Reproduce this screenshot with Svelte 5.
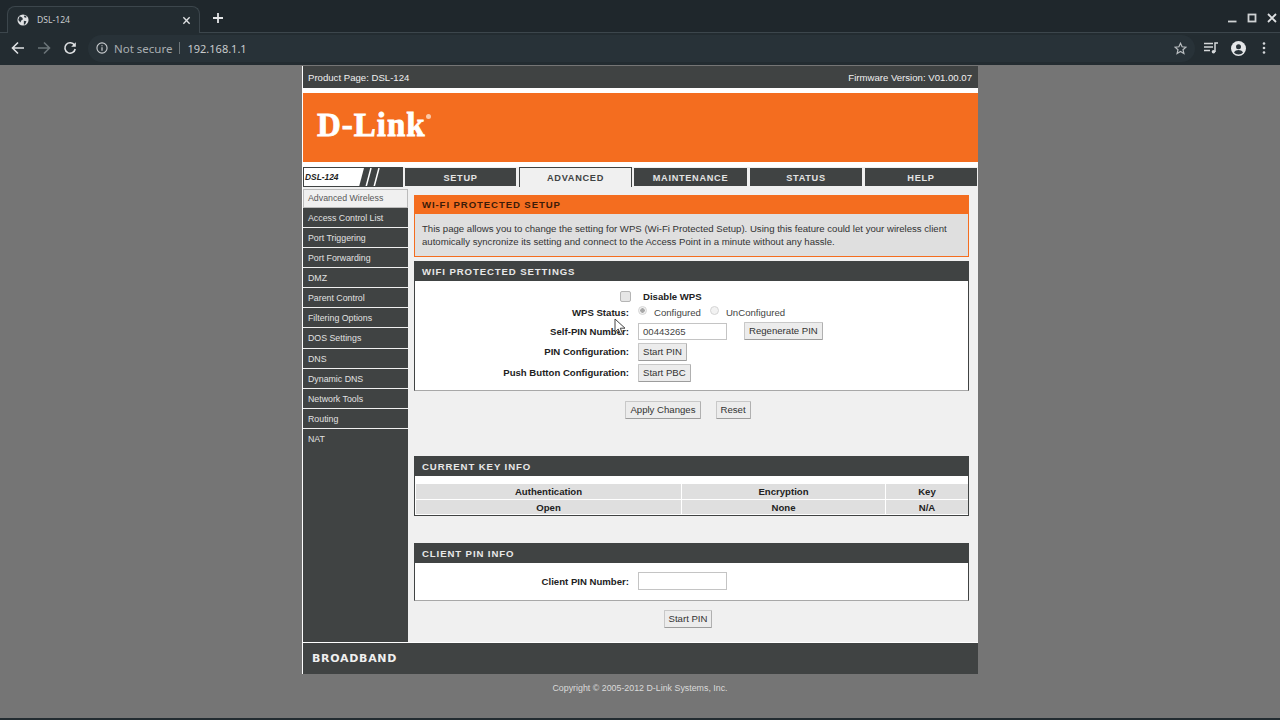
<script>
    const tabs = ["SETUP", "ADVANCED", "MAINTENANCE", "STATUS", "HELP"];
    const side = [
        "Advanced Wireless", "Access Control List", "Port Triggering", "Port Forwarding", "DMZ", "Parent Control",
        "Filtering Options", "DOS Settings", "DNS", "Dynamic DNS", "Network Tools", "Routing", "NAT"
    ];
</script>

<div class="browser">
    <div class="tabstrip">
        <div class="tab">
            <svg class="globe" width="12" height="12" viewBox="0 0 14 14">
                <circle cx="7" cy="7" r="6.5" fill="#dfe1e3" />
                <path d="M3 2.500l3 1.500 1 2-2 1.500-1 2.500-2.500-3zM8 8l3 .5-1.500 3.500-1.500.5zM9 1.500l2.500 2-1.500 1-2-1z" fill="#2a343a" />
            </svg>
            <span class="tab-title">DSL-124</span>
            <svg class="tab-x" width="9" height="9" viewBox="0 0 10 10"><path d="M1.500 1.500l7 7M8.500 1.500l-7 7" stroke="#dfe1e3" stroke-width="1.500" /></svg>
        </div>
        <svg class="plus" width="12" height="12" viewBox="0 0 12 12"><path d="M6 1v10M1 6h10" stroke="#e4e6e8" stroke-width="1.800" /></svg>
        <div class="winctl">
            <svg width="10" height="10" viewBox="0 0 10 10"><path d="M1 8.500h8.500" stroke="#cfd2d4" stroke-width="1.800" /></svg>
            <svg width="10" height="10" viewBox="0 0 10 10"><rect x="1.500" y="1.500" width="7" height="7" fill="none" stroke="#cfd2d4" stroke-width="1.800" /></svg>
            <svg width="10" height="10" viewBox="0 0 10 10"><path d="M1 1l8 8M9 1l-8 8" stroke="#dfe1e3" stroke-width="1.800" /></svg>
        </div>
    </div>
    <div class="toolbar">
        <svg width="14" height="14" viewBox="0 0 14 14"><path d="M13 7H2M7 1.500L1.500 7 7 12.500" fill="none" stroke="#dfe1e3" stroke-width="1.600" /></svg>
        <svg class="fwd" width="14" height="14" viewBox="0 0 14 14"><path d="M1 7h11M7 1.500L12.500 7 7 12.500" fill="none" stroke="#6b7478" stroke-width="1.600" /></svg>
        <svg class="reload" width="14" height="14" viewBox="0 0 14 14"><path d="M11.500 4.200A5.200 5.200 0 1 0 12.200 8" fill="none" stroke="#dfe1e3" stroke-width="1.600" /><path d="M12.800 1.200v4.600H8.200z" fill="#dfe1e3" /></svg>
        <div class="omnibox">
            <svg width="12" height="12" viewBox="0 0 13 13"><circle cx="6.500" cy="6.500" r="5.500" fill="none" stroke="#c9cccf" stroke-width="1.200" /><path d="M6.500 5.800v3.600M6.500 3.400v1.200" stroke="#c9cccf" stroke-width="1.300" /></svg>
            <span class="secure">Not secure</span>
            <span class="bar"></span>
            <span class="url">192.168.1.1</span>
            <svg class="star" width="13" height="13" viewBox="0 0 13 13"><path d="M6.500 1.300l1.600 3.500 3.800.4-2.900 2.500.9 3.700-3.400-2-3.400 2 .9-3.700L1.100 5.200l3.800-.4z" fill="none" stroke="#b9bdc0" stroke-width="1.200" /></svg>
        </div>
        <svg class="queue" width="14" height="12" viewBox="0 0 14 12"><path d="M0 1.500h9M0 5h9M0 8.500h6" stroke="#d5d8da" stroke-width="1.400" /><path d="M11 10V1h3" fill="none" stroke="#d5d8da" stroke-width="1.500" /><circle cx="9.500" cy="9.800" r="1.800" fill="#d5d8da" /></svg>
        <svg class="avatar" width="15" height="15" viewBox="0 0 15 15"><circle cx="7.500" cy="7.500" r="7.500" fill="#e4e6e8" /><circle cx="7.500" cy="5.700" r="2.500" fill="#2a343a" /><path d="M3 11.500c1-2 2.700-2.600 4.500-2.600s3.500.6 4.500 2.600c-1 1.200-2.700 1.900-4.500 1.900S4 12.700 3 11.500z" fill="#2a343a" /></svg>
        <svg class="dots" width="4" height="12" viewBox="0 0 4 12"><circle cx="2" cy="1.500" r="1.300" fill="#d5d8da" /><circle cx="2" cy="6" r="1.300" fill="#d5d8da" /><circle cx="2" cy="10.500" r="1.300" fill="#d5d8da" /></svg>
    </div>
</div>

<div class="viewport">
    <div class="page">
        <div class="topbar">
            <span>Product Page: DSL-124</span>
            <span>Firmware Version: V01.00.07</span>
        </div>
        <div class="banner">
            <span class="logo">D-Link</span><span class="logo-dot"></span>
        </div>
        <div class="nav">
            <div class="model">
                <span class="model-name">DSL-124</span>
                <svg class="slashes" width="46" height="19" viewBox="0 0 46 19">
                    <path d="M2 19L7 0H46V19z" fill="#404343" />
                    <path d="M9 19L14 0M17 19L22 0" stroke="#fff" stroke-width="1.500" />
                </svg>
            </div>
            {#each tabs as t}
                <div class="navtab" class:active={t === "ADVANCED"}>{t}</div>
            {/each}
        </div>
        <div class="body">
            <div class="sidebar">
                {#each side as s, i}
                    <div class="sideitem" class:current={i === 0}>{s}</div>
                {/each}
            </div>
            <div class="main">
                <div class="intro">
                    <div class="intro-head">WI-FI PROTECTED SETUP</div>
                    <p>This page allows you to change the setting for WPS (Wi-Fi Protected Setup). Using this feature could let your wireless client automically syncronize its setting and connect to the Access Point in a minute without any hassle.</p>
                </div>

                <div class="box settings">
                    <div class="box-head">WIFI PROTECTED SETTINGS</div>
                    <div class="form">
                        <div class="row r-disable">
                            <div class="lbl chk-cell"><span class="chk"></span></div>
                            <div class="val"><b class="disable-label">Disable WPS</b></div>
                        </div>
                        <div class="row r-status">
                            <div class="lbl">WPS Status:</div>
                            <div class="val radios">
                                <span class="radio on"></span><span class="rtext">Configured</span>
                                <span class="radio"></span><span class="rtext">UnConfigured</span>
                            </div>
                        </div>
                        <div class="row r-pin">
                            <div class="lbl">Self-PIN Number:</div>
                            <div class="val">
                                <span class="input">00443265</span>
                                <span class="btn regen">Regenerate PIN</span>
                            </div>
                        </div>
                        <div class="row r-btn">
                            <div class="lbl">PIN Configuration:</div>
                            <div class="val"><span class="btn">Start PIN</span></div>
                        </div>
                        <div class="row r-btn">
                            <div class="lbl">Push Button Configuration:</div>
                            <div class="val"><span class="btn">Start PBC</span></div>
                        </div>
                    </div>
                </div>

                <div class="actions">
                    <span class="btn">Apply Changes</span>
                    <span class="btn">Reset</span>
                </div>

                <div class="box keyinfo">
                    <div class="box-head">CURRENT KEY INFO</div>
                    <div class="keys">
                        <div>Authentication</div><div>Encryption</div><div>Key</div>
                        <div>Open</div><div>None</div><div>N/A</div>
                    </div>
                </div>

                <div class="box clientpin">
                    <div class="box-head">CLIENT PIN INFO</div>
                    <div class="row client-row">
                        <div class="lbl">Client PIN Number:</div>
                        <div class="val"><span class="input client-input"></span></div>
                    </div>
                </div>

                <div class="actions last">
                    <span class="btn">Start PIN</span>
                </div>
            </div>
        </div>
        <div class="footer"><span class="broadband">BROADBAND</span></div>
    </div>
    <div class="copyright">Copyright © 2005-2012 D-Link Systems, Inc.</div>
    <svg class="cursor" width="12" height="18" viewBox="0 0 12 18"><path d="M1 1v13l3.200-3 2.400 5.500 2-.9-2.300-5.400H11z" fill="#fff" stroke="#444" stroke-width="1" /></svg>
</div>
<div class="bottom"></div>

<style>
    :global(body) {
        margin: 0;
        background: #757575;
        font-family: "Liberation Sans", Arial, sans-serif;
        overflow: hidden;
    }
    .browser {
        height: 65px;
        background: #232c31;
        box-sizing: border-box;
    }
    .tabstrip {
        height: 33px;
        display: flex;
        align-items: flex-end;
        position: relative;
        border-bottom: 1px solid #3c464c;
        box-sizing: border-box;
        background: #1f272c;
    }
    .tab {
        width: 193px;
        height: 27px;
        margin-left: 7px;
        margin-bottom: -1px;
        background: #232c31;
        border: 1px solid #3c464c;
        border-bottom: none;
        border-radius: 8px 8px 0 0;
        display: flex;
        align-items: center;
        box-sizing: border-box;
        padding: 0 8px 0 9px;
    }
    .tab-title {
        margin-left: 8px;
        font-family: "Noto Sans", sans-serif;
        font-size: 8.6px;
        color: #c8cbcd;
    }
    .tab-x { margin-left: auto; }
    .plus { margin: 0 0 8px 12px; }
    .winctl {
        margin-left: auto;
        display: flex;
        gap: 10px;
        padding-right: 3px;
        margin-bottom: 9px;
    }
    .toolbar {
        height: 32px;
        display: flex;
        align-items: center;
        padding: 0 0 2px 11px;
        box-sizing: border-box;
    }
    .fwd { margin-left: 12px; }
    .reload { margin-left: 12px; }
    .omnibox {
        flex: 0 0 1107px;
        height: 27px;
        margin-left: 11px;
        display: flex;
        align-items: center;
        padding-left: 8px;
        box-sizing: border-box;
        border-radius: 14px;
        background: #283238;
        font-family: "Noto Sans", sans-serif;
        font-size: 11.5px;
    }
    .secure { margin-left: 6px; color: #a9aeb1; }
    .bar { width: 1px; height: 12px; background: #6b7478; margin: 0 7px; }
    .url { color: #c8cbcd; font-size: 11px; }
    .star { margin-left: auto; margin-right: 8px; }
    .queue { margin-left: 9px; }
    .avatar { margin-left: 13px; }
    .dots { margin-left: 16px; }

    .viewport {
        height: 653px;
        background: #757575;
        position: relative;
        overflow: hidden;
    }
    .page {
        width: 675px;
        margin-left: 303px;
        margin-top: 1px;
        background: #fff;
        box-shadow: -1px 0 0 #fff;
    }
    .topbar {
        height: 22px;
        background: #404343;
        color: #f0f0f0;
        font-size: 9.6px;
        display: flex;
        justify-content: space-between;
        align-items: center;
        padding: 0 6px 0 5px;
    }
    .banner {
        height: 69px;
        margin-top: 5px;
        background: #f46d1f;
        display: flex;
        align-items: center;
        padding: 0 0 5px 14px;
        box-sizing: border-box;
    }
    .logo {
        font-family: "Liberation Serif", serif;
        font-weight: bold;
        font-size: 33px;
        letter-spacing: 1px;
        -webkit-text-stroke: 0.8px #fff;
        color: #fff;
    }
    .logo-dot {
        width: 5px;
        height: 5px;
        border-radius: 50%;
        background: #fbc9a8;
        margin: -17px 0 0 0;
    }
    .nav {
        margin-top: 5px;
        height: 20px;
        display: flex;
        align-items: flex-end;
        background: #f0f0f0;
    }
    .model {
        width: 100px;
        height: 20px;
        box-sizing: border-box;
        background: #fff;
        border: 1px solid #404343;
        position: relative;
        display: flex;
        align-items: center;
        justify-content: space-between;
        overflow: hidden;
    }
    .model-name {
        font-size: 8.4px;
        font-style: italic;
        font-weight: bold;
        color: #222;
        padding-left: 1px;
        white-space: nowrap;
    }
    .slashes { flex: none; margin-right: -1px; }
    .navtab {
        width: 112px;
        margin-left: 3px;
        height: 18px;
        margin-bottom: 1px;
        background: #404343;
        color: #e4e4e4;
        font-size: 9.2px;
        font-weight: bold;
        letter-spacing: 0.7px;
        display: flex;
        align-items: center;
        justify-content: center;
        padding-top: 1px;
        box-sizing: border-box;
    }
    .navtab:nth-child(2) { margin-left: 2px; width: 111px; }
    .navtab:nth-child(4) { margin-left: 2px; width: 113px; }
    .navtab.active {
        height: 20px;
        margin-bottom: 0;
        width: 113px;
        background: #f0f0f0;
        color: #404343;
        border: 1px solid #404343;
        border-bottom: none;
    }
    .body {
        display: flex;
        height: 455px;
        background: #f0f0f0;
        padding-top: 2px;
        box-sizing: border-box;
    }
    .sidebar {
        width: 105px;
        flex: none;
        background: #404343;
    }
    .sideitem {
        height: 20.08px;
        box-sizing: border-box;
        padding-left: 5px;
        font-size: 8.8px;
        line-height: 20px;
        color: #e2e2e2;
        border-bottom: 1px solid #f0f0f0;
    }
    .sideitem:last-child { border-bottom: none; }
    .sideitem.current {
        height: 19px;
        background: #f0f0f0;
        color: #585858;
        border: 1px solid #bbb;
        padding-left: 4px;
        line-height: 17px;
    }
    .main {
        width: 555px;
        margin-left: 6px;
        padding-top: 6px;
        color: #222;
        font-size: 9.6px;
    }
    .intro {
        background: #dfdfdf;
        border: 1px solid #f46d1f;
        border-top: none;
        height: 62px;
        box-sizing: border-box;
    }
    .intro-head {
        height: 19px;
        background: #f46d1f;
        color: #3c1b08;
        font-size: 9.6px;
        font-weight: bold;
        letter-spacing: 0.9px;
        line-height: 20px;
        padding-left: 8px;
        margin: 0 -1px;
    }
    .intro p {
        margin: 0;
        padding: 8px 8px 0 7px;
        font-size: 9.6px;
        line-height: 13px;
        color: #333;
    }
    .box {
        background: #fff;
        border: 1px solid #404343;
        border-top: none;
        box-sizing: border-box;
    }
    .settings {
        margin-top: 4px;
        height: 130px;
        border-bottom-color: #a8a8a8;
    }
    .box-head {
        height: 20px;
        background: #404343;
        color: #e8e8e8;
        font-size: 9.6px;
        font-weight: bold;
        letter-spacing: 0.9px;
        line-height: 21px;
        margin: 0 -1px;
        padding-left: 8px;
    }
    .form { padding-top: 7px; }
    .row {
        display: flex;
        align-items: center;
    }
    .lbl {
        width: 214px;
        text-align: right;
        font-weight: bold;
        color: #222;
        flex: none;
    }
    .val {
        margin-left: 9px;
        display: flex;
        align-items: center;
    }
    .r-disable { height: 16px; }
    .chk-cell { display: flex; justify-content: flex-end; }
    .chk {
        width: 9px;
        height: 9px;
        margin-right: -2px;
        background: #e6e6e6;
        border: 1px solid #b5b5b5;
        border-radius: 2px;
    }
    .disable-label { margin-left: 5px; }
    .r-status { height: 17px; }
    .radio {
        width: 9px;
        height: 9px;
        border-radius: 50%;
        border: 1px solid #d5d5d5;
        background: #f2f2f2;
        box-sizing: border-box;
        position: relative;
        top: -2px;
        margin-right: 7px;
    }
    .radio.on {
        background: radial-gradient(circle, #a8a8a8 0 2px, #f2f2f2 2.5px);
    }
    .rtext { color: #444; margin-right: 9px; }
    .r-pin { height: 20px; }
    .r-btn { height: 21px; }
    .input {
        display: block;
        width: 89px;
        height: 17px;
        box-sizing: border-box;
        background: #fff;
        border: 1px solid #c4c4c4;
        padding-left: 4px;
        line-height: 15px;
        color: #444;
    }
    .client-input { height: 18px; }
    .btn {
        display: inline-block;
        height: 18px;
        line-height: 16px;
        box-sizing: border-box;
        padding: 0 4px;
        background: #ececec;
        border: 1px solid #c8c8c8;
        border-bottom-color: #9c9c9c;
        border-right-color: #b0b0b0;
        border-radius: 1px;
        color: #333;
    }
    .regen { margin-left: 17px; }
    .actions {
        display: flex;
        justify-content: center;
        gap: 15px;
        margin-top: 10px;
        padding-right: 7px;
    }
    .actions.last { margin-top: 9px; }
    .keyinfo {
        margin-top: 37px;
        height: 60px;
    }
    .keys {
        margin-top: 8px;
        display: grid;
        grid-template-columns: 265px 203px 82px;
        column-gap: 1px;
        row-gap: 1px;
        padding: 0 1px;
        font-weight: bold;
        text-align: center;
        color: #222;
    }
    .keys div {
        background: #dfdfdf;
        height: 14.5px;
        line-height: 15px;
    }
    .clientpin {
        margin-top: 27px;
        height: 58px;
        border-bottom-color: #a8a8a8;
    }
    .client-row { height: 36px; }
    .footer {
        height: 31px;
        margin-top: 1px;
        background: #404343;
        display: flex;
        align-items: center;
        padding-left: 9px;
    }
    .broadband {
        font-family: "DejaVu Sans", sans-serif;
        font-weight: bold;
        font-size: 11px;
        letter-spacing: 0.7px;
        color: #efefef;
    }
    .copyright {
        margin-top: 9px;
        text-align: center;
        font-size: 8.85px;
        color: #dadada;
    }
    .cursor {
        position: absolute;
        left: 614px;
        top: 253px;
    }
    .bottom { height: 2px; background: #232c31; }
</style>
